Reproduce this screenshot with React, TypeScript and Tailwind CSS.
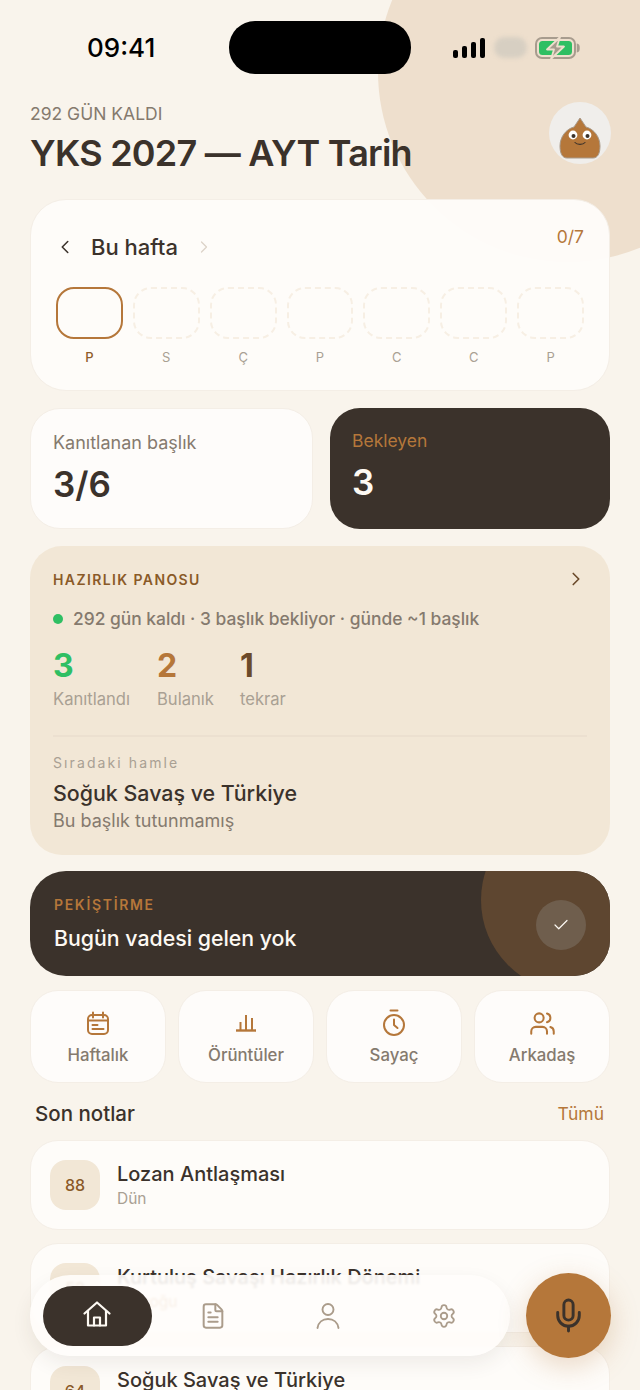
import React from 'react';
import { Check, ChevronLeft, ChevronRight, FileText, Mic, Settings, Users } from 'lucide-react';

const days = ['P', 'S', 'Ç', 'P', 'C', 'C', 'P'];

const CalendarIcon: React.FC = () => (
  <svg width="24" height="25" viewBox="0 0 24 25" fill="none" stroke="#b5773a" strokeWidth="2" strokeLinecap="round">
    <rect x="2" y="4" width="20" height="19" rx="4" />
    <path d="M7 1.5v5M17 1.5v5M2.5 9.5h19M6.5 14h5M6.5 18h11" />
  </svg>
);

const BarsIcon: React.FC = () => (
  <svg width="24" height="18" viewBox="0 0 24 18" fill="none" stroke="#b5773a" strokeWidth="2">
    <path d="M2 16.500h20" strokeWidth="2.400" />
    <path d="M6.500 16V8M12 16V1M18 16V4" />
  </svg>
);

const TimerIcon: React.FC = () => (
  <svg width="24" height="28" viewBox="0 0 24 28" fill="none" stroke="#b5773a" strokeWidth="2" strokeLinecap="round" strokeLinejoin="round">
    <path d="M8.500 1.500h7" />
    <circle cx="12" cy="16" r="10" />
    <path d="M12 10.500V16l3.500 3" />
  </svg>
);

const HomeIcon: React.FC = () => (
  <svg className="mb-[3px] mr-[1px]" width="28" height="26" viewBox="0 0 28 26" fill="none" stroke="#fdf9f3" strokeWidth="2.200" strokeLinejoin="round" strokeLinecap="round">
    <path d="M1.500 12.500 14 1.500l12.500 11" />
    <path d="M5 10v14.500h18V10" />
    <path d="M11 24.500V16.500h6v8" />
  </svg>
);

const PersonIcon: React.FC = () => (
  <svg className="mr-[2px]" width="24" height="26" viewBox="0 0 24 26" fill="none" stroke="#ab9c8b" strokeWidth="1.900" strokeLinecap="round">
    <circle cx="12" cy="6.500" r="5.500" />
    <path d="M1.500 25c.8-5.500 5-9 10.500-9s9.700 3.500 10.500 9" />
  </svg>
);

const Mascot: React.FC = () => (
  <svg width="44" height="42" viewBox="0 0 44 42">
    <path
      d="M22 1l6 9c8 2 14 10 14 19 0 7-2 12-7 12H9c-5 0-7-5-7-12 0-9 6-17 14-19Z"
      fill="#b5773a"
      stroke="#a89a8a"
      strokeWidth="1"
    />
    <circle cx="15" cy="18" r="4.400" fill="#fff" />
    <circle cx="29" cy="18" r="4.400" fill="#fff" />
    <circle cx="15.500" cy="19" r="2" fill="#3b322b" />
    <circle cx="29.500" cy="19" r="2" fill="#3b322b" />
    <path d="M17 25.500c2 2.500 8 2.500 10 0" fill="none" stroke="#3b322b" strokeWidth="1.100" strokeLinecap="round" />
  </svg>
);

const StatusIcons: React.FC = () => (
  <div className="flex items-center">
    <div className="flex items-end gap-[4px] h-[20px]">
      <div className="w-[5px] h-[8px] rounded-[2px] bg-black" />
      <div className="w-[5px] h-[12px] rounded-[2px] bg-black" />
      <div className="w-[5px] h-[16px] rounded-[2px] bg-black" />
      <div className="w-[5px] h-[20px] rounded-[2px] bg-black" />
    </div>
    <div className="ml-[9px] w-[33px] h-[21px] rounded-full bg-[#d7cfc2] blur-[2px]" />
    <svg className="ml-[8px]" width="46" height="22" viewBox="0 0 46 22">
      <rect x="1" y="1" width="39" height="20" rx="6" fill="none" stroke="#a79c8e" strokeWidth="2" />
      <rect x="4" y="4" width="33" height="14" rx="3.500" fill="#2fbf63" />
      <path d="M42.500 7.500c2 .5 2 6.500 0 7Z" fill="#a79c8e" stroke="#a79c8e" strokeWidth="1.500" />
      <path d="M25 0 12 12.500h7L16 22l13-12.500h-7Z" fill="#a79c8e" stroke="#eedfcd" strokeWidth="1.800" strokeLinejoin="round" />
    </svg>
  </div>
);

const NoteCard: React.FC<{ score: string; title: string; sub: string; subClass: string }> = ({ score, title, sub, subClass }) => (
  <div className="flex items-center h-[90px] rounded-[28px] bg-[#fefcfa]/95 border border-[#f4eee6] pl-[19px]">
    <div className="flex items-center justify-center w-[50px] h-[50px] rounded-[16px] bg-[#f2e7d6] text-[16px] font-medium text-[#8a5a28]">
      {score}
    </div>
    <div className="ml-[17px]">
      <div className="text-[20px] leading-[26px] font-medium text-[#3b322b]">{title}</div>
      <div className={`h-[22px] text-[15.500px] leading-[22px] mt-[1px] ${subClass}`}>{sub}</div>
    </div>
  </div>
);

const Shortcut: React.FC<{ icon: React.ReactNode; label: string }> = ({ icon, label }) => (
  <div className="flex flex-col items-center h-[93px] rounded-[28px] bg-[#fefcfa] border border-[#f4eee6]">
    <div className="flex items-center justify-center h-[28px] mt-[18px]">{icon}</div>
    <div className="mt-[7px] text-[16.800px] leading-[22px] font-medium text-[#857a6e]">{label}</div>
  </div>
);

const App: React.FC = () => {
  return (
    <div className="relative w-[640px] h-[1390px] overflow-hidden bg-[#f9f4ec] font-['Inter','Liberation_Sans',sans-serif]">
      {/* decor circle behind the header */}
      <div className="absolute left-[378px] top-[-118px] w-[380px] h-[380px] rounded-full bg-[#eedfcd]" />

      <div className="relative px-[30px]">
        {/* status bar */}
        <div className="relative flex items-center justify-between pt-[21px] h-[74px]">
          <div className="ml-[57px] w-[68px] text-center text-[26px] leading-none font-medium text-black">09:41</div>
          <div className="absolute left-[199px] top-[21px] w-[182px] h-[53px] rounded-[26px] bg-black" />
          <div className="mr-[29px]">
            <StatusIcons />
          </div>
        </div>

        {/* header */}
        <div className="flex items-start justify-between mt-[28px] h-[97px]">
          <div>
            <div className="text-[17.500px] leading-[24px] font-normal text-[#857a6e]">292 GÜN KALDI</div>
            <div className="text-[36px] leading-[48px] font-semibold tracking-[-0.75px] text-[#3b322b] mt-[3px]">YKS 2027 — AYT Tarih</div>
          </div>
          <div className="flex items-start justify-center w-[62px] h-[62px] mr-[-1px] pt-[15px] rounded-full bg-[#f0eeeb] overflow-hidden">
            <Mascot />
          </div>
        </div>

        {/* week */}
        <div className="h-[192px] rounded-[36px] bg-[#fefcfa]/95 border border-[#f4eee6] px-[25px]">
          <div className="relative flex items-center h-[24px] mt-[35px]">
            <ChevronLeft className="ml-[-2px]" size={22} color="#3b322b" strokeWidth={1.7} />
            <span className="ml-[15px] text-[22px] font-medium text-[#3b322b]">Bu hafta</span>
            <ChevronRight className="ml-[16px]" size={20} color="#dcd3c8" strokeWidth={1.5} />
            <span className="absolute right-0 top-[-10px] text-[17.500px] leading-[24px] text-[#b5773a]">0/7</span>
          </div>
          <div className="grid grid-cols-7 gap-[10px] mt-[28px]">
            {days.map((d, i) => (
              <div key={i} className="flex flex-col items-center">
                <div
                  className={
                    i === 0
                      ? 'w-full h-[52px] rounded-[18px] border-2 border-[#b5773a]'
                      : 'w-full h-[52px] rounded-[18px] border-2 border-dashed border-[#f7efe4]'
                  }
                />
                <div className={i === 0 ? 'mt-[9px] text-[13px] leading-[18px] font-medium text-[#8f5d2a]' : 'mt-[9px] text-[13px] leading-[18px] text-[#a9a093]'}>
                  {d}
                </div>
              </div>
            ))}
          </div>
        </div>

        {/* stats */}
        <div className="grid grid-cols-[283px_1fr] gap-[17px] mt-[17px]">
          <div className="h-[121px] rounded-[30px] bg-[#fefcfa] border border-[#f4eee6] pl-[22px] pt-[22px]">
            <div className="text-[18px] leading-[24px] text-[#857a6e]">Kanıtlanan başlık</div>
            <div className="mt-[6px] text-[35px] leading-[46px] font-semibold text-[#3b322b]">3/6</div>
          </div>
          <div className="h-[121px] rounded-[30px] bg-[#3b322b] pl-[22px] pt-[21px]">
            <div className="text-[17.500px] leading-[24px] text-[#b5773a]">Bekleyen</div>
            <div className="mt-[6px] text-[35px] leading-[46px] font-semibold text-[#fdf9f3]">3</div>
          </div>
        </div>

        {/* readiness panel */}
        <div className="h-[309px] mt-[17px] rounded-[32px] bg-[#f2e7d6] px-[23px] pt-[23px]">
          <div className="flex items-center justify-between h-[20px]">
            <span className="text-[14px] font-semibold tracking-[0.1em] text-[#8a5a28]">HAZIRLIK PANOSU</span>
            <ChevronRight size={22} color="#6b4a2a" strokeWidth={1.8} />
          </div>
          <div className="flex items-center mt-[19px] h-[22px]">
            <span className="w-[10px] h-[10px] rounded-full bg-[#2fbf63]" />
            <span className="ml-[10px] text-[17.400px] font-medium text-[#857a6e]">292 gün kaldı · 3 başlık bekliyor · günde ~1 başlık</span>
          </div>
          <div className="flex mt-[15px]">
            <div className="w-[104px]">
              <div className="text-[32px] leading-[42px] font-bold text-[#2fbf63]">3</div>
              <div className="text-[16.600px] leading-[22px] text-[#a9a093] mt-[1px]">Kanıtlandı</div>
            </div>
            <div className="w-[83px]">
              <div className="text-[32px] leading-[42px] font-bold text-[#b5773a]">2</div>
              <div className="text-[16.600px] leading-[22px] text-[#a9a093] mt-[1px]">Bulanık</div>
            </div>
            <div>
              <div className="text-[32px] leading-[42px] font-bold text-[#6b4a2a]">1</div>
              <div className="text-[16.600px] leading-[22px] text-[#a9a093] mt-[1px]">tekrar</div>
            </div>
          </div>
          <div className="h-[2px] bg-[#ece0d0] mt-[25px]" />
          <div className="mt-[16px] text-[14px] leading-[20px] tracking-[0.15em] text-[#a9a093]">Sıradaki hamle</div>
          <div className="mt-[5px] text-[21.400px] leading-[30px] font-medium text-[#3b322b]">Soğuk Savaş ve Türkiye</div>
          <div className="mt-[1px] text-[18px] leading-[24px] text-[#857a6e]">Bu başlık tutunmamış</div>
        </div>

        {/* review card */}
        <div className="relative flex items-center h-[105px] mt-[16px] rounded-[36px] bg-[#3b322b] overflow-hidden pl-[24px]">
          <div className="absolute right-[-55px] top-[-63px] w-[184px] h-[184px] rounded-full bg-[#5e4630]" />
          <div className="relative">
            <div className="text-[14px] leading-[20px] font-semibold tracking-[0.12em] text-[#b5773a]">PEKİŞTİRME</div>
            <div className="mt-[9px] text-[21.300px] leading-[28px] font-medium text-[#fdf9f3]">Bugün vadesi gelen yok</div>
          </div>
          <div className="absolute right-[24px] top-[29px] flex items-center justify-center w-[50px] h-[50px] rounded-full bg-[#6f5e4d]">
            <Check size={18} color="#fdf9f3" strokeWidth={1.6} />
          </div>
        </div>

        {/* shortcuts */}
        <div className="grid grid-cols-4 gap-[12px] mt-[14px]">
          <Shortcut icon={<CalendarIcon />} label="Haftalık" />
          <Shortcut icon={<BarsIcon />} label="Örüntüler" />
          <Shortcut icon={<TimerIcon />} label="Sayaç" />
          <Shortcut icon={<Users size={27} color="#b5773a" strokeWidth={1.8} />} label="Arkadaş" />
        </div>

        {/* recent notes */}
        <div className="flex items-center justify-between h-[28px] mt-[17px] pl-[5px] pr-[6px]">
          <span className="text-[20.500px] font-medium text-[#3b322b]">Son notlar</span>
          <span className="text-[17.500px] text-[#b5773a]">Tümü</span>
        </div>
        <div className="flex flex-col gap-[13px] mt-[12px]">
          <NoteCard score="88" title="Lozan Antlaşması" sub="Dün" subClass="text-[#a9a093]" />
          <NoteCard score="52" title="Kurtuluş Savaşı Hazırlık Dönemi" sub="Az çoğu" subClass="text-[#b5773a]" />
          <NoteCard score="64" title="Soğuk Savaş ve Türkiye" sub="" subClass="text-[#a9a093]" />
        </div>
      </div>

      {/* floating nav */}
      <div className="absolute left-[30px] top-[1275px] flex items-center w-[480px] h-[81px] rounded-full bg-[#fffdfb]/90 backdrop-blur-[1px] shadow-[0_8px_20px_rgba(59,50,43,0.08)] pl-[13px]">
        <div className="flex items-center justify-center w-[109px] h-[60px] rounded-full bg-[#3b322b]">
          <HomeIcon />
        </div>
        <div className="flex items-center justify-center w-[116px] ml-[3px]">
          <FileText size={28} color="#ab9c8b" strokeWidth={1.7} />
        </div>
        <div className="flex items-center justify-center w-[116px]">
          <PersonIcon />
        </div>
        <div className="flex items-center justify-center w-[116px]">
          <Settings className="mr-[2px]" size={26} color="#ab9c8b" strokeWidth={1.7} />
        </div>
      </div>
      <div className="absolute left-[526px] top-[1273px] flex items-center justify-center w-[85px] h-[85px] rounded-full bg-[#b5773a] shadow-[0_8px_28px_rgba(181,119,58,0.28)]">
        <Mic size={37} color="#3b322b" strokeWidth={1.9} />
      </div>
    </div>
  );
};

export default App;
